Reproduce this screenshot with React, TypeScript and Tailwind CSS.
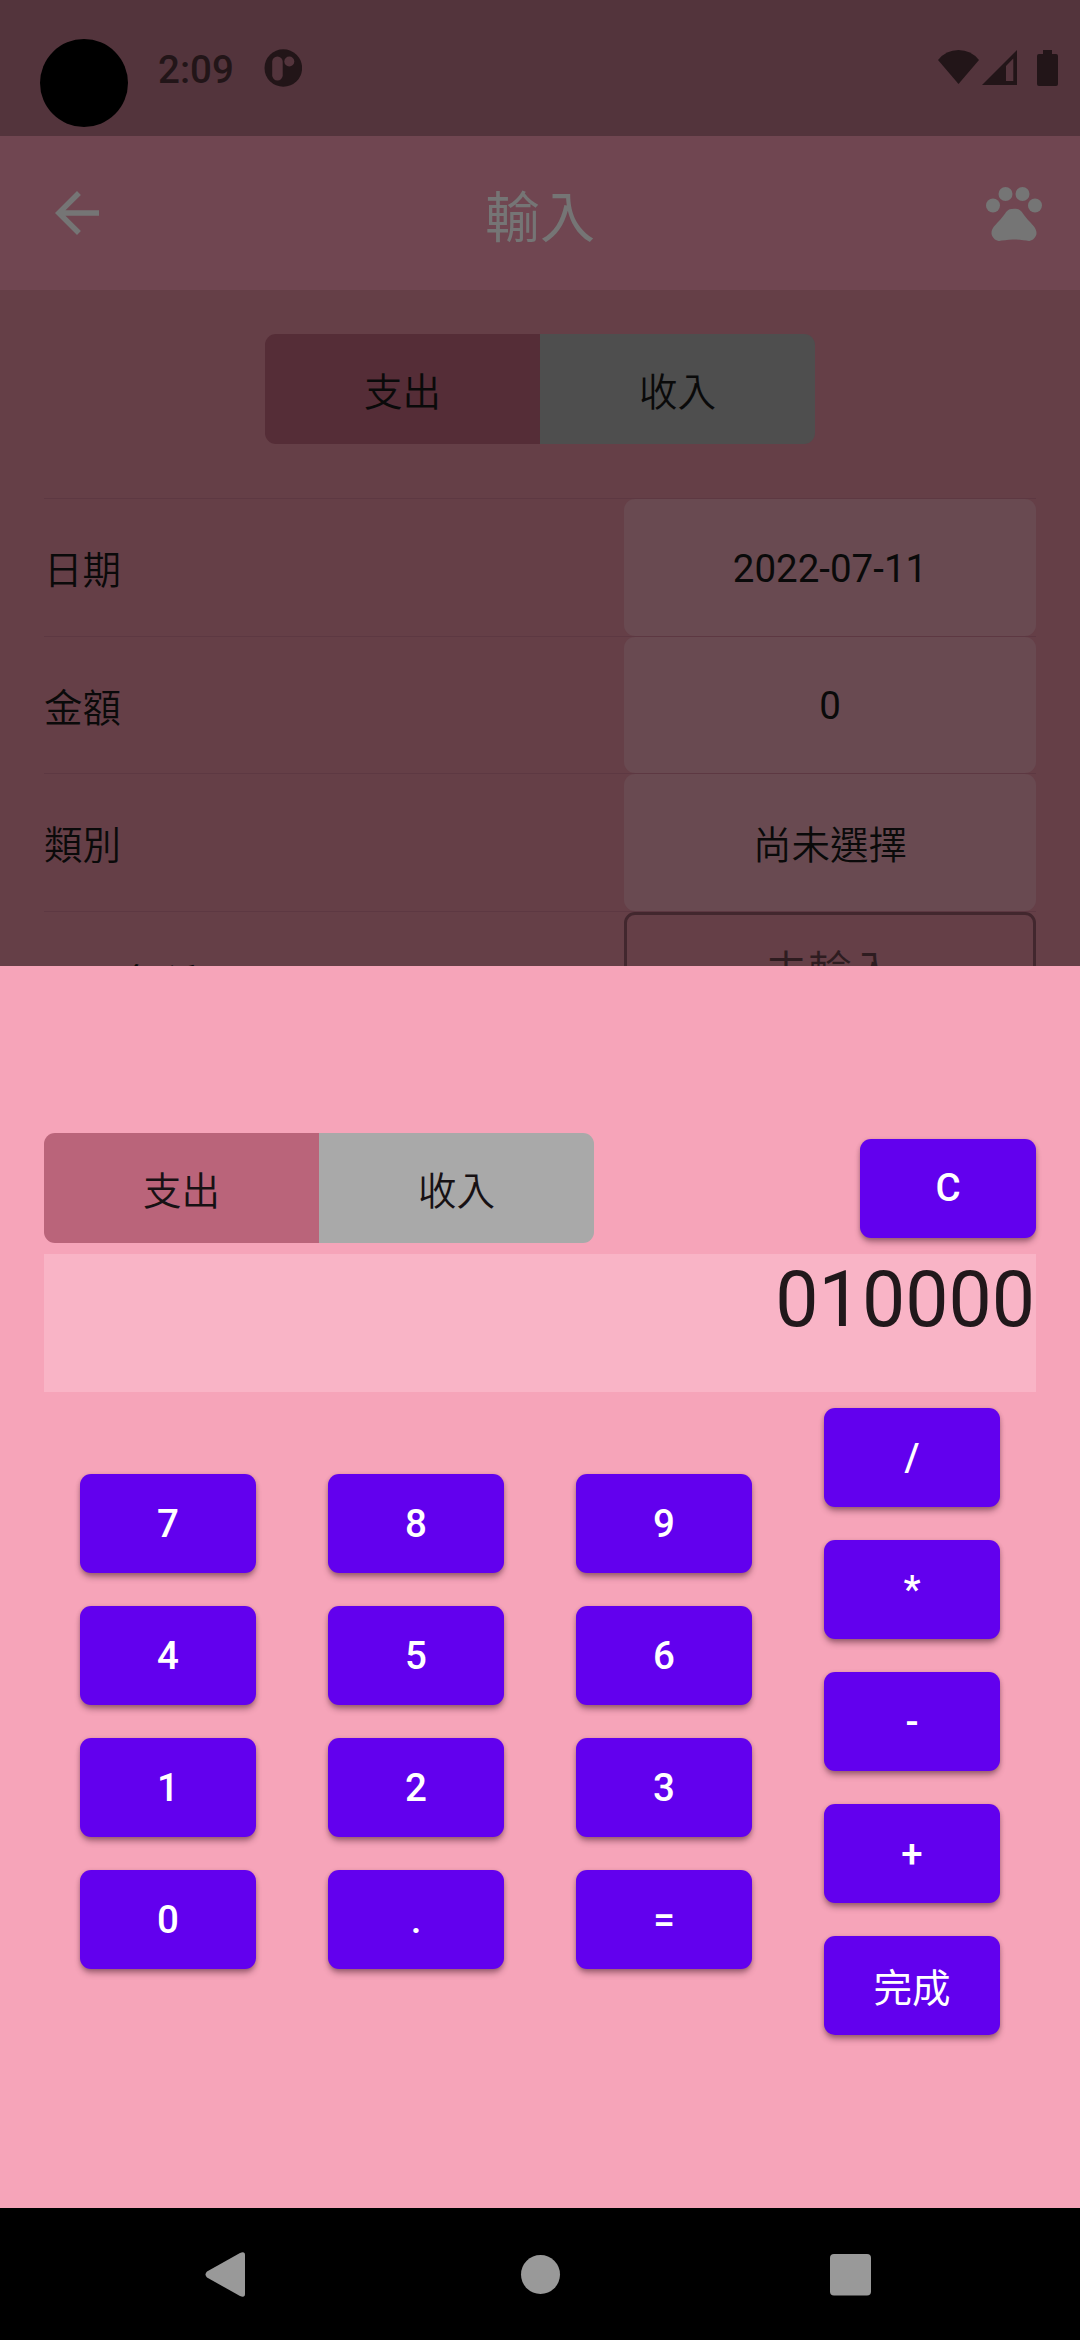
import React from "react";

const font =
  "font-[Roboto,'Noto_Sans_CJK_TC',sans-serif]";

const rows = [
  { label: "日期", value: "2022-07-11", valueClass: "pt-[3px]" },
  { label: "金額", value: "0", valueClass: "pt-[3px]" },
  { label: "類別", value: "尚未選擇", valueClass: "pt-[8px] font-[350]" },
];

const columns = [
  ["7", "4", "1", "0"],
  ["8", "5", "2", "."],
  ["9", "6", "3", "="],
  ["/", "*", "-", "+", "完成"],
];

function Key({ label }: { label: string }) {
  return (
    <button
      className={`flex h-[99px] w-[176px] items-center justify-center rounded-[11px] bg-[#6200ee] text-[38.5px] leading-none text-white shadow-[0_5px_6px_-1px_rgba(60,20,35,0.42),0_1px_4px_rgba(60,20,35,0.2)] ${
        label === "完成" ? "pt-[8px] font-normal" : "pt-px font-medium"
      }`}
    >
      {label}
    </button>
  );
}

function Segment({ className, children }: { className: string; children: React.ReactNode }) {
  return <div className={`flex flex-1 items-center justify-center pt-[8px] font-[350] ${className}`}>{children}</div>;
}

function StatusBar() {
  return (
    <div className="flex h-[136px] bg-[#53343c] text-[#221518]">
      <div className="mt-[39px] ml-10 size-[88px] shrink-0 rounded-full bg-black" />
      <div className="mt-[47px] ml-[30px] w-[106px] text-[38.5px] leading-[46px] font-medium">2:09</div>
      <svg className="mt-[49px] size-[38px]" viewBox="0 0 38 38">
        <circle cx="19.3" cy="19" r="18.8" fill="#221518" />
        <rect x="8.2" y="7.5" width="10.500" height="24" rx="5.25" fill="#53343c" />
        <circle cx="25.3" cy="12.5" r="5" fill="#53343c" />
      </svg>
      <svg className="mt-[49px] ml-auto h-[38px] w-[142px]" viewBox="938 49 142 38" fill="#221518">
        <path d="M938 60Q946 50 958.500 50Q971 50 979 60L958.500 84Z" />
        <path fillRule="evenodd" d="M982 85L1017 50V85ZM1006 66V81H1013.300V58.500Z" />
        <path d="M1043 50H1052V54H1056Q1058 54 1058 56V84Q1058 86 1056 86H1039Q1037 86 1037 84V56Q1037 54 1039 54H1043Z" />
      </svg>
    </div>
  );
}

function AppBar() {
  return (
    <div className="flex h-[154px] items-center justify-between bg-[#704651] pr-[38px] pl-[55px] text-[#757575]">
      <svg className="h-11 w-[56px]" viewBox="0 0 56 44" fill="currentColor">
        <path d="M44 19.250H10.500L25.900 3.900L22 0L0 22L22 44L25.900 40.100L10.500 24.750H44Z" />
      </svg>
      <div className="mr-[17px] pt-[9px] text-[55px] leading-[80px] font-normal">輸入</div>
      <svg className="mt-[2px] h-[54px] w-[56px]" viewBox="0 0 56 54" fill="currentColor">
        <circle cx="7" cy="18.500" r="7" />
        <circle cx="19.500" cy="7" r="7" />
        <circle cx="36.500" cy="7" r="7" />
        <circle cx="49" cy="18.500" r="7" />
        <path d="M43.500 34.500C41.200 31.800 39.200 29.500 36.900 26.400C35.700 24.800 34.200 22.900 32.400 22.300C29.800 21.500 26.200 21.500 23.600 22.300C21.800 22.900 20.300 24.800 19.100 26.400C16.800 29.500 14.800 31.800 12.500 34.500C9 38.500 4.800 41.900 5.600 47.300C6.400 50.500 8.900 53.400 12.500 53.900C15.500 54.100 20.900 52.600 27 52.600H29C35.100 52.600 40.500 54.100 43.500 53.900C47.100 53.400 49.600 50.500 50.400 47.300C51.200 41.900 47 38.500 43.500 34.500Z" />
      </svg>
    </div>
  );
}

export default function App() {
  return (
    <div className={`relative flex h-[2340px] w-[1080px] flex-col overflow-hidden bg-[#653f47] ${font}`}>
      <StatusBar />
      <AppBar />
      <div className="h-[676px] overflow-hidden px-11 text-[38.5px] text-[#0a0a0a]">
        <div className="mx-auto mt-11 flex h-[110px] w-[550px] overflow-hidden rounded-[11px]">
          <Segment className="bg-[#552d37]">支出</Segment>
          <Segment className="bg-[#4e4e4e]">收入</Segment>
        </div>
        <div className="mt-[54px]">
          {rows.map((row) => (
            <div key={row.label} className="flex h-[137.5px] items-center justify-between border-t border-[#5d3842]">
              <div className="pt-[8px] font-[350]">{row.label}</div>
              <div
                className={`flex h-full w-[412px] items-center justify-center rounded-[11px] bg-[#694a51] ${row.valueClass}`}
              >
                {row.value}
              </div>
            </div>
          ))}
          <div className="flex h-[137.5px] items-center justify-between border-t border-[#5d3842]">
            <div className="pt-[8px] font-[350]">項目名稱</div>
            <div className="flex h-full w-[412px] justify-center rounded-[11px] border-3 border-[#42272e] pt-[30px] text-[44px] leading-[56px] font-[350] text-[#2e1c20]">
              未輸入
            </div>
          </div>
        </div>
      </div>
      <div className="flex h-[1242px] flex-col bg-[#f6a4b9] px-11 pt-[167px]">
        <div className="flex items-center justify-between">
          <div className="flex h-[110px] w-[550px] overflow-hidden rounded-[11px] text-[38.5px] text-[#171114]">
            <Segment className="bg-[#ba647a]">支出</Segment>
            <Segment className="bg-[#a9a9a9]">收入</Segment>
          </div>
          <Key label="C" />
        </div>
        <div className="mt-[11px] h-[138px] bg-[#f9b4c6] pt-px pr-px text-right text-[77px] leading-[90px] text-[#21181b]">
          010000
        </div>
        <div className="mt-4 grid grid-cols-4 items-center justify-items-center">
          {columns.map((column) => (
            <div key={column[0]} className="flex flex-col gap-[33px]">
              {column.map((label) => (
                <Key key={label} label={label} />
              ))}
            </div>
          ))}
        </div>
      </div>
      <div className="flex h-[132px] items-center bg-black">
        <svg className="h-[46px] w-full" viewBox="0 2251 1080 46" fill="#999999">
          <path d="M207 2271.500L240 2253Q245 2251 245 2255V2294Q245 2298 240 2296L207 2277.500Q204 2274.500 207 2271.500Z" />
          <circle cx="540.500" cy="2274.500" r="19.500" />
          <rect x="830" y="2254" width="41" height="41.500" rx="4" />
        </svg>
      </div>
    </div>
  );
}
